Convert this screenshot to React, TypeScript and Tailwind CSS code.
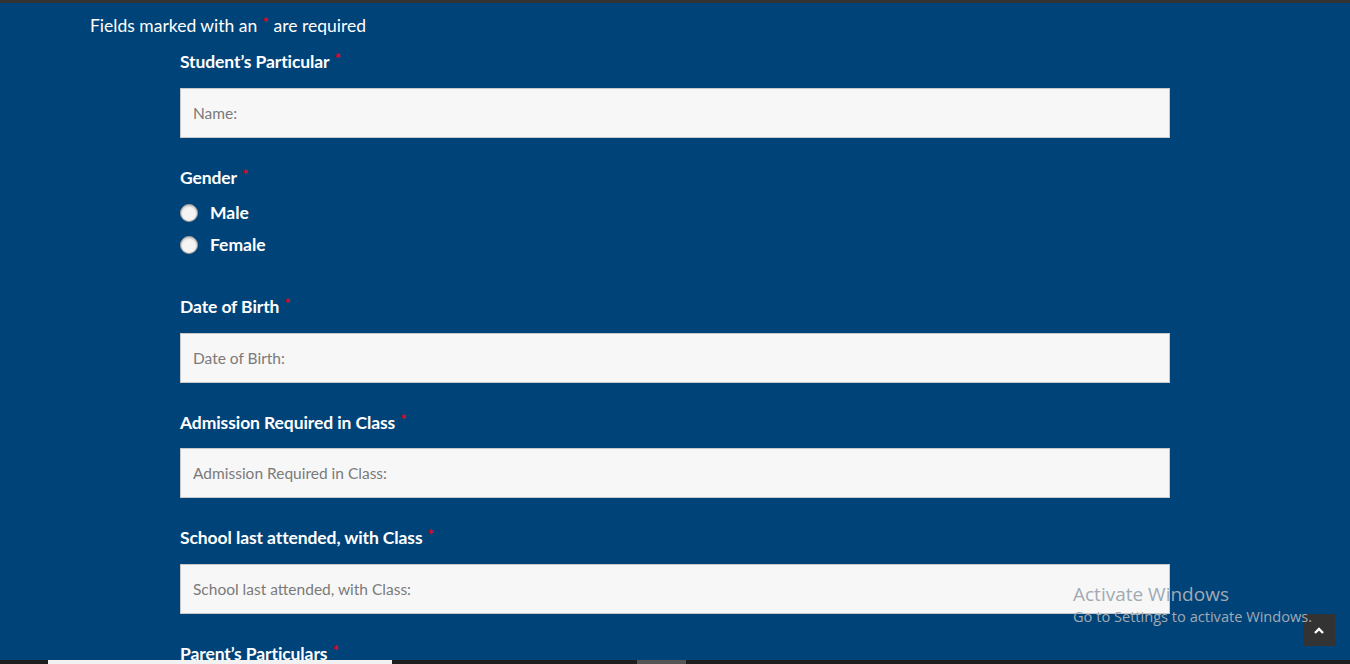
import React from "react";

const Req = () => (
  <span className="relative -top-[4px] ml-[5px] text-[15px] font-bold text-[#e8001c]">*</span>
);

const Label = ({ text }: { text: string }) => (
  <div className="flex h-[24px] items-center text-[17.5px] font-bold tracking-[-0.1px] text-white">
    {text}
    <Req />
  </div>
);

const Field = ({ placeholder, top = "mt-[14px]" }: { placeholder: string; top?: string }) => (
  <input
    type="text"
    placeholder={placeholder}
    className={`${top} h-[50px] w-[990px] border border-[#c8c8c8] bg-[#f7f7f7] px-[12px] text-[15.5px] text-[#555] placeholder:text-[#7a7a7a] outline-none`}
  />
);

const Radio = ({ label }: { label: string }) => (
  <label className="flex h-[32px] items-center gap-[12px] text-[17.5px] font-bold text-white">
    <span className="h-[18px] w-[18px] rounded-full border border-[#9a9a9a] bg-[#f4f4f4] shadow-[inset_0_1px_2px_rgba(0,0,0,0.25)]" />
    {label}
  </label>
);

export default function App() {
  return (
    <div
      className="relative h-[664px] w-[1350px] overflow-hidden bg-[#004379]"
      style={{ fontFamily: "Lato, 'Open Sans', sans-serif" }}
    >
      <div className="h-[3px] w-full bg-[#333]" />
      <div className="flex h-[658px] flex-col">
        <div className="ml-[90px] mt-[10px] flex h-[26px] items-center text-[17.5px] text-white">
          Fields marked with an
          <span className="relative -top-[4px] mx-[5px] text-[15px] font-bold text-[#e8001c]">*</span>
          are required
        </div>
        <div className="ml-[180px] mt-[11px] flex flex-col">
          <Label text="Student’s Particular" />
          <Field placeholder="Name:" />
          <div className="mt-[28px]">
            <Label text="Gender" />
          </div>
          <div className="mt-[7px] flex flex-col">
            <Radio label="Male" />
            <Radio label="Female" />
          </div>
          <div className="mt-[34px]">
            <Label text="Date of Birth" />
          </div>
          <Field placeholder="Date of Birth:" />
          <div className="mt-[28px]">
            <Label text="Admission Required in Class" />
          </div>
          <Field placeholder="Admission Required in Class:" top="mt-[13px]" />
          <div className="mt-[28px]">
            <Label text="School last attended, with Class" />
          </div>
          <Field placeholder="School last attended, with Class:" />
          <div className="mt-[28px]">
            <Label text="Parent’s Particulars" />
          </div>
        </div>
      </div>
      <div className="absolute bottom-0 left-0 flex h-[4px] w-full bg-[#1e1e1e]">
        <div className="ml-[48px] w-[344px] bg-[#f2f2f2]" />
        <div className="ml-[245px] w-[49px] bg-[#555]" />
      </div>
      <button className="absolute left-[1303px] top-[614px] flex h-[32px] w-[32px] items-center justify-center bg-[#333]">
        <svg width="10" height="7" viewBox="0 0 10 7">
          <path d="M1 6 L5 2 L9 6" stroke="#fff" strokeWidth="2.4" fill="none" />
        </svg>
      </button>
      {/* windows watermark sits on top of everything */}
      <div className="pointer-events-none absolute left-[1073px] top-[582px] z-10 flex flex-col text-[#a2aab3]">
        <span className="text-[19px] leading-[24px]" style={{ fontFamily: "'Open Sans', sans-serif" }}>
          Activate Windows
        </span>
        <span className="text-[14.6px] leading-[20px]" style={{ fontFamily: "'Open Sans', sans-serif" }}>
          Go to Settings to activate Windows.
        </span>
      </div>
    </div>
  );
}
